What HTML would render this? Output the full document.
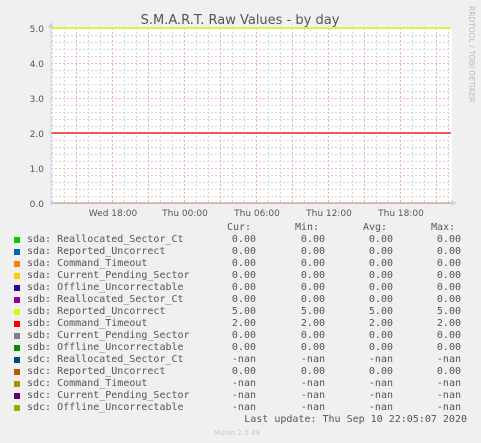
<!DOCTYPE html>
<html><head><meta charset="utf-8"><style>
body{margin:0;width:481px;height:443px;background:#f0f0f0;overflow:hidden;position:relative;font-family:"DejaVu Sans Mono","Liberation Mono",monospace;}
.t{position:absolute;white-space:pre;color:#555;font-size:10px;line-height:12px;}
.sq{position:absolute;width:6px;height:6px;left:14px;}
</style></head><body>
<svg width="481" height="443" style="position:absolute;left:0;top:0">
<rect x="51" y="28" width="401" height="175" fill="#fff"/>
<g id="grid" shape-rendering="crispEdges"></g>
<text x="240" y="24" text-anchor="middle" font-family="DejaVu Sans, Liberation Sans, sans-serif" font-size="13" fill="#555">S.M.A.R.T. Raw Values - by day</text>
<g font-family="DejaVu Sans, Liberation Sans, sans-serif" font-size="9" fill="#555" text-anchor="end">
<text x="44" y="32">5.0</text><text x="44" y="67">4.0</text><text x="44" y="102">3.0</text><text x="44" y="137">2.0</text><text x="44" y="172">1.0</text><text x="44" y="207">0.0</text>
</g>
<g font-family="DejaVu Sans, Liberation Sans, sans-serif" font-size="9" fill="#555" text-anchor="middle">
<text x="113" y="216">Wed 18:00</text><text x="185" y="216">Thu 00:00</text><text x="257" y="216">Thu 06:00</text><text x="329" y="216">Thu 12:00</text><text x="401" y="216">Thu 18:00</text>
</g>
<text x="469" y="6" transform="rotate(90 469 6)" font-family="DejaVu Sans, Liberation Sans, sans-serif" font-size="7.5" fill="#bbb">RRDTOOL / TOBI OETIKER</text>
<line x1="51" y1="28" x2="451" y2="28" stroke="#ccff00" stroke-width="1.5"/>
<line x1="51" y1="133" x2="451" y2="133" stroke="#e00" stroke-width="1.3"/>
<line x1="51" y1="203" x2="451" y2="203" stroke="#c0a090" stroke-width="1.3"/>
<line x1="51" y1="25" x2="51" y2="206" stroke="#ccd0ee" stroke-width="1"/>
<polygon points="48,28 54,28 51,22" fill="#ccd0ee"/>
<polygon points="451,200 451,206 457,203" fill="#ccd0ee"/>
</svg>
<script>
var g=document.getElementById('grid'),s='';
for(var y=28;y<=203;y+=7){var maj=((y-28)%35==0);s+='<line x1="51" x2="451" y1="'+(y+.5)+'" y2="'+(y+.5)+'" stroke="'+(maj?'#f0b0b0':'#d4d4d4')+'" stroke-dasharray="2,2"/>';}
for(var x=52;x<=450;x+=12){var maj=((x-76)%36==0);s+='<line y1="28" y2="203" x1="'+(x+.5)+'" x2="'+(x+.5)+'" stroke="'+(maj?'#f0b0b0':'#d4d4d4')+'" stroke-dasharray="2,2"/>';}
g.innerHTML=s;
</script>
<div class="t" style="left:227px;top:222px">Cur:</div>
<div class="t" style="left:295px;top:222px">Min:</div>
<div class="t" style="left:363px;top:222px">Avg:</div>
<div class="t" style="left:431px;top:222px">Max:</div>
<div id="leg"></div>
<script>
var rows=[["#00cc00","sda: Reallocated_Sector_Ct","0.00","0.00","0.00","0.00"],
["#0066b3","sda: Reported_Uncorrect","0.00","0.00","0.00","0.00"],
["#ff8000","sda: Command_Timeout","0.00","0.00","0.00","0.00"],
["#ffcc00","sda: Current_Pending_Sector","0.00","0.00","0.00","0.00"],
["#330099","sda: Offline_Uncorrectable","0.00","0.00","0.00","0.00"],
["#990099","sdb: Reallocated_Sector_Ct","0.00","0.00","0.00","0.00"],
["#ccff00","sdb: Reported_Uncorrect","5.00","5.00","5.00","5.00"],
["#ff0000","sdb: Command_Timeout","2.00","2.00","2.00","2.00"],
["#808080","sdb: Current_Pending_Sector","0.00","0.00","0.00","0.00"],
["#008f00","sdb: Offline_Uncorrectable","0.00","0.00","0.00","0.00"],
["#00487d","sdc: Reallocated_Sector_Ct","-nan","-nan","-nan","-nan"],
["#b35a00","sdc: Reported_Uncorrect","0.00","0.00","0.00","0.00"],
["#b38f00","sdc: Command_Timeout","-nan","-nan","-nan","-nan"],
["#6b006b","sdc: Current_Pending_Sector","-nan","-nan","-nan","-nan"],
["#8fb300","sdc: Offline_Uncorrectable","-nan","-nan","-nan","-nan"]];
var h='',ends=[256,325,393,461];
rows.forEach(function(r,i){var y=234+i*12;
h+='<div class="sq" style="top:'+(y+3)+'px;background:'+r[0]+'"></div>';
h+='<div class="t" style="left:27px;top:'+y+'px">'+r[1]+'</div>';
for(var k=0;k<4;k++)h+='<div class="t" style="right:'+(481-ends[k])+'px;top:'+y+'px">'+r[k+2]+'</div>';});
document.getElementById('leg').innerHTML=h;
</script>
<div class="t" style="right:14px;top:414px">Last update: Thu Sep 10 22:05:07 2020</div>
<div class="t" style="left:214px;top:427px;font-family:'DejaVu Sans',sans-serif;font-size:7px;color:#c8c8c8">Munin 2.0.49</div>
</body></html>
